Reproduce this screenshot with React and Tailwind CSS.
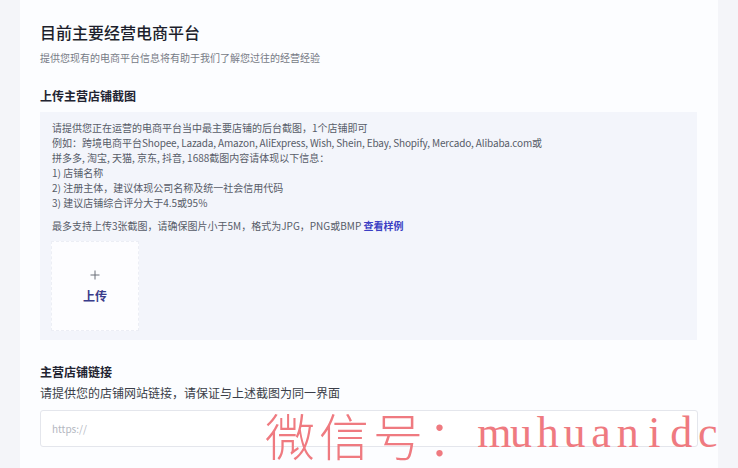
export default function App() {
  const font = { fontFamily: '"Noto Sans CJK SC", "Noto Sans", sans-serif' };
  const latin = 'muhuanidc'.split('');
  return (
    <div
      className="relative w-[738px] h-[468px] overflow-hidden bg-[#f4f5f9] flex px-[20px]"
      style={font}
    >
      <div className="w-[700px] h-full bg-[#fcfdff] px-[20px] pt-[20px] flex flex-col">
        <h1 className="text-[16px] leading-[24px] font-medium text-[#1d1f2c]">目前主要经营电商平台</h1>
        <p className="mt-[6px] text-[10px] leading-[16px] text-[#777b86]">
          提供您现有的电商平台信息将有助于我们了解您过往的经营经验
        </p>
        <h2 className="mt-[21px] text-[12px] leading-[18px] font-bold text-[#222431]">上传主营店铺截图</h2>
        <div className="mt-[7px] w-[657px] bg-[#f3f5fb] px-[12px] pt-[8px] pb-[9px] text-[10px] leading-[15px] text-[#575c68]">
          <p>请提供您正在运营的电商平台当中最主要店铺的后台截图，1个店铺即可</p>
          <p>
            例如：跨境电商平台
            <span className="tracking-[-0.15px]">Shopee, Lazada, Amazon, AliExpress, Wish, Shein, Ebay, Shopify, Mercado, Alibaba.com</span>或
          </p>
          <p>拼多多, 淘宝, 天猫, 京东, 抖音, 1688截图内容请体现以下信息：</p>
          <p>1) 店铺名称</p>
          <p>2) 注册主体，建议体现公司名称及统一社会信用代码</p>
          <p>3) 建议店铺综合评分大于4.5或95%</p>
          <p className="mt-[8px]">
            最多支持上传3张截图，请确保图片小于5M，格式为JPG，PNG或BMP{' '}
            <span className="font-bold text-[#3b3fc4]">查看样例</span>
          </p>
          <div className="mt-[8px] ml-[-1px] w-[88px] h-[90px] bg-[#fdfdff] border border-dashed border-[#eceef5] flex flex-col items-center justify-center">
            <svg width="10" height="10" viewBox="0 0 10 10" className="mt-[2px]">
              <path d="M5 0.5V9.5M0.5 5H9.5" stroke="#6b6e78" strokeWidth="1" fill="none" />
            </svg>
            <span className="mt-[8px] text-[12px] leading-[16px] font-bold text-[#3a3c8a]">上传</span>
          </div>
        </div>
        <h2 className="mt-[23px] text-[12px] leading-[18px] font-bold text-[#222431]">主营店铺链接</h2>
        <p className="mt-[3px] text-[12px] leading-[18px] text-[#3a3d48]">
          请提供您的店铺网站链接，请保证与上述截图为同一界面
        </p>
        <div className="mt-[8px] w-[658px] h-[37px] bg-white border border-[#e4e6ec] rounded-[3px] flex items-center px-[11px]">
          <span className="text-[10px] text-[#b4b7bf]">https://</span>
        </div>
      </div>
      <div
        className="absolute left-[265px] top-[409px] w-[216px] text-[50px] leading-none tracking-[4px] text-[#ef7a80] pointer-events-none whitespace-nowrap"
        style={{ fontFamily: '"Noto Sans CJK SC", serif', fontWeight: 300 }}
      >
        微信号：
      </div>
      <div
        className="absolute left-[481px] top-[411px] flex text-[44px] leading-none text-[#ef7a80] pointer-events-none"
        style={{ fontFamily: '"Liberation Serif", serif' }}
      >
        {latin.map((c, i) => (
          <span key={i} className="w-[26.7px] flex justify-center">
            {c}
          </span>
        ))}
      </div>
    </div>
  );
}
